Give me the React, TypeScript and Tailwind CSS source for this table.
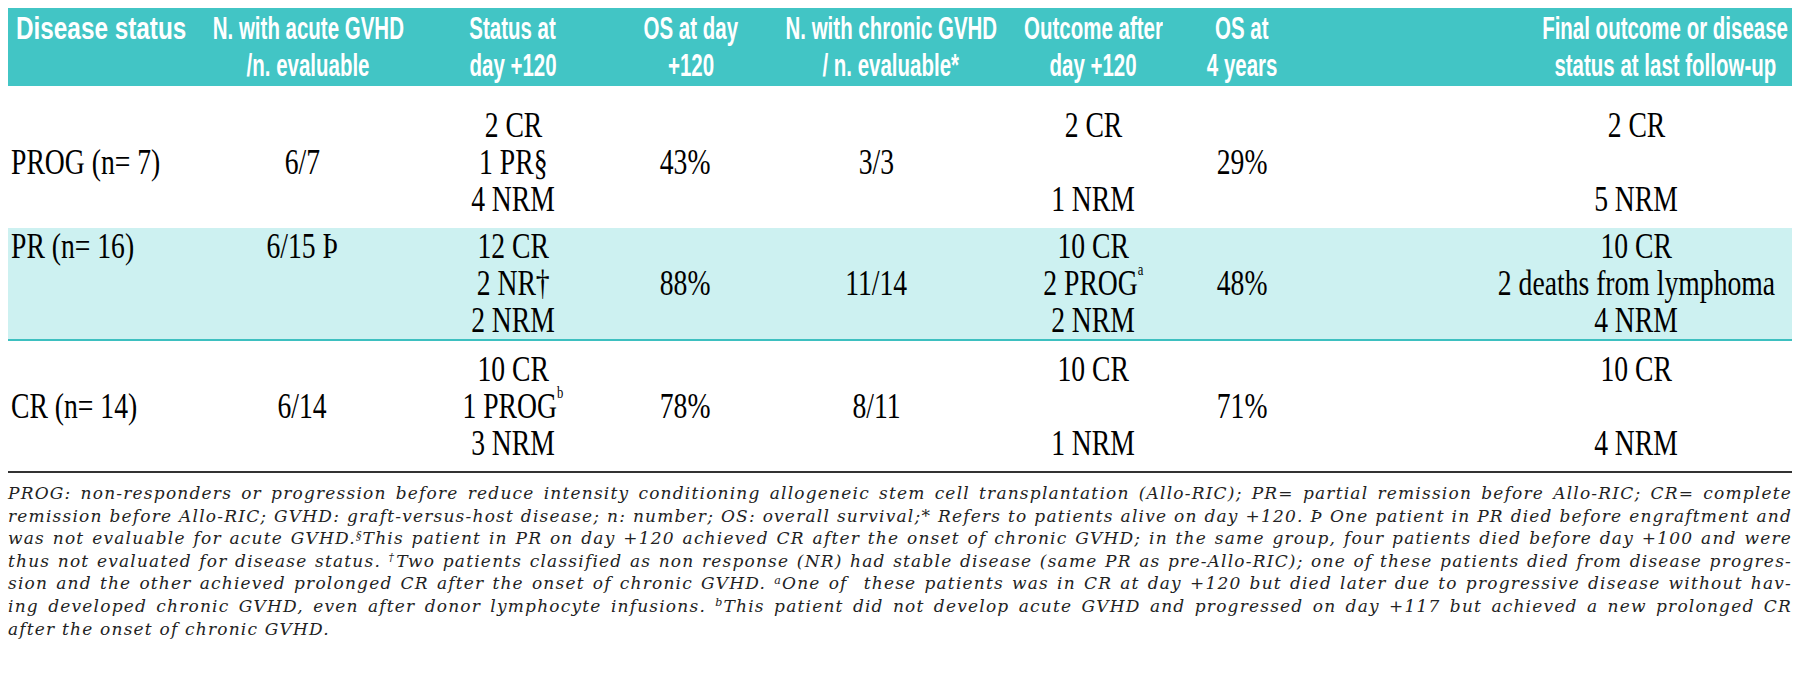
import type { ReactNode } from "react";

type Cell = {
  lines: ReactNode[];
  top?: boolean;
};

type Row = {
  cells: Cell[];
  className: string;
};

// column widths measured off the reference; the last one takes the rest
const grid = "grid grid-cols-[192px_204px_218px_126px_256px_178px_120px_minmax(0,1fr)]";

const headers: { lines: string[]; className: string }[] = [
  { lines: ["Disease status"], className: "justify-start pl-[8px]" },
  { lines: ["N. with acute GVHD", "/n. evaluable"], className: "justify-center pl-[12px]" },
  { lines: ["Status at", "day +120"], className: "justify-center" },
  { lines: ["OS at day", "+120"], className: "justify-center pl-[12px]" },
  { lines: ["N. with chronic GVHD", "/ n. evaluable*"], className: "justify-center pl-[30px]" },
  { lines: ["Outcome after", "day +120"], className: "justify-center" },
  { lines: ["OS at", "4 years"], className: "justify-center" },
  { lines: ["Final outcome or disease", "status at last follow-up"], className: "justify-center pl-[236px]" },
];

const Sup = ({ children }: { children: ReactNode }) => (
  <sup className="text-[16px] align-[12px]">{children}</sup>
);

const rows: Row[] = [
  {
    className: "pt-[21px] pb-[10px]",
    cells: [
      { lines: ["PROG (n= 7)"] },
      { lines: ["6/7"] },
      { lines: ["2 CR", "1 PR§", "4 NRM"] },
      { lines: ["43%"] },
      { lines: ["3/3"] },
      { lines: ["2 CR", "\u00a0", "1 NRM"] },
      { lines: ["29%"] },
      { lines: ["2 CR", "\u00a0", "5 NRM"] },
    ],
  },
  {
    className: "bg-[#cdf1f1] border-b-2 border-[#3dc0c0]",
    cells: [
      { lines: ["PR (n= 16)"], top: true },
      { lines: ["6/15 Þ"], top: true },
      { lines: ["12 CR", "2 NR†", "2 NRM"] },
      { lines: ["88%"] },
      { lines: ["11/14"] },
      { lines: ["10 CR", <>2 PROG<Sup>a</Sup></>, "2 NRM"] },
      { lines: ["48%"] },
      { lines: ["10 CR", "2 deaths from lymphoma", "4 NRM"] },
    ],
  },
  {
    className: "pt-[10px] pb-[9px]",
    cells: [
      { lines: ["CR (n= 14)"] },
      { lines: ["6/14"] },
      { lines: ["10 CR", <>1 PROG<Sup>b</Sup></>, "3 NRM"] },
      { lines: ["78%"] },
      { lines: ["8/11"] },
      { lines: ["10 CR", "\u00a0", "1 NRM"] },
      { lines: ["71%"] },
      { lines: ["10 CR", "\u00a0", "4 NRM"] },
    ],
  },
];

const bodyCol = [
  "justify-start pl-[3px]",
  "justify-center",
  "justify-center",
  "justify-center",
  "justify-center",
  "justify-center",
  "justify-center",
  "justify-center pl-[178px]",
];

const notes: ReactNode[] = [
  "PROG: non-responders or progression before reduce intensity conditioning allogeneic stem cell transplantation (Allo-RIC); PR= partial remission before Allo-RIC; CR= complete",
  "remission before Allo-RIC; GVHD: graft-versus-host disease; n: number; OS: overall survival;* Refers to patients alive on day +120. Þ One patient in PR died before engraftment and",
  <>
    was not evaluable for acute GVHD.<sup className="text-[11px]">§</sup>This patient in PR on day +120 achieved CR after the onset of chronic GVHD; in the same group, four patients died before day +100 and were
  </>,
  <>
    thus not evaluated for disease status. <sup className="text-[11px]">†</sup>Two patients classified as non response (NR) had stable disease (same PR as pre-Allo-RIC); one of these patients died from disease progres-
  </>,
  <>
    sion and the other achieved prolonged CR after the onset of chronic GVHD. <sup className="text-[11px]">a</sup>One of&nbsp; these patients was in CR at day +120 but died later due to progressive disease without hav-
  </>,
  <>
    ing developed chronic GVHD, even after donor lymphocyte infusions. <sup className="text-[11px]">b</sup>This patient did not develop acute GVHD and progressed on day +117 but achieved a new prolonged CR
  </>,
];

export default function App() {
  return (
    <div className="w-[1800px] h-[694px] bg-white px-2 pt-2">
      {/* Header band */}
      <div
        className={`${grid} bg-[#42c5c5] text-white font-bold text-[32px] leading-[37px] py-[2px] font-['Liberation_Sans',Arial,sans-serif]`}
      >
        {headers.map((h, i) => (
          <div key={i} className={i === 0 ? "self-start" : ""}>
            {h.lines.map((l, j) => (
              <div key={j} className={`flex whitespace-nowrap ${h.className}`}>
                <span className={`inline-block ${i === 0 ? "origin-left scale-x-[0.76]" : "scale-x-[0.64]"}`}>{l}</span>
              </div>
            ))}
          </div>
        ))}
      </div>

      {/* Body rows */}
      {rows.map((row, r) => (
        <div
          key={r}
          className={`${grid} items-center text-[35px] leading-[37px] text-black font-['Liberation_Serif','Times_New_Roman',serif] ${row.className}`}
        >
          {row.cells.map((c, i) => (
            <div key={i} className={c.top ? "self-start" : ""}>
              {c.lines.map((l, j) => (
                <div key={j} className={`flex whitespace-nowrap ${bodyCol[i]}`}>
                  <span className={`inline-block scale-x-[0.79] ${i === 0 ? "origin-left" : ""}`}>{l}</span>
                </div>
              ))}
            </div>
          ))}
        </div>
      ))}

      {/* Footnote */}
      <div className="border-t-2 border-[#333] pt-[9px] italic text-[17px] leading-[22.6px] tracking-[1.2px] text-[#222] font-['DejaVu_Serif',serif]">
        {notes.map((n, i) => (
          <p key={i} className="text-justify [text-align-last:justify] whitespace-nowrap">
            {n}
          </p>
        ))}
        <p>after the onset of chronic GVHD.</p>
      </div>
    </div>
  );
}
